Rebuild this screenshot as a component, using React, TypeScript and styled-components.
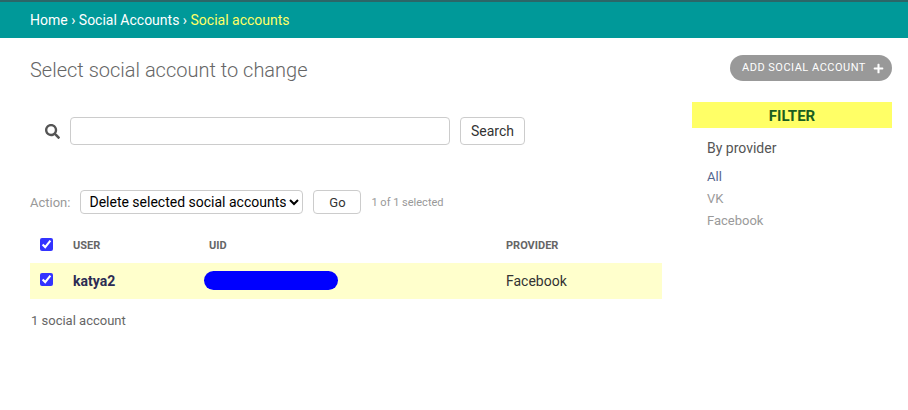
import { createGlobalStyle, styled } from 'styled-components'
import { FaSearch, FaPlus } from 'react-icons/fa'

const GlobalStyle = createGlobalStyle`
  html, body {
    margin: 0;
    padding: 0;
    background: #fff;
    font-family: Roboto, "Liberation Sans", sans-serif;
    color: #333;
  }
`

const Breadcrumbs = styled.div`
  height: 36px;
  border-top: 2px solid #2b6668;
  background: #009999;
  padding: 0 30px;
  display: flex;
  align-items: center;
  font-size: 14px;
  color: #fff;
  white-space: pre;
`

const Current = styled.span`
  color: #ffff66;
`

const Content = styled.div`
  display: flex;
  padding: 17px 16px 0 30px;
`

const Main = styled.div`
  width: 632px;
`

const Title = styled.h1`
  margin: 0;
  height: 30px;
  line-height: 30px;
  font-size: 20px;
  font-weight: 300;
  color: #666;
`

const SearchRow = styled.form`
  display: flex;
  align-items: center;
  margin: 32px 0 0 15px;
  height: 28px;
`

const SearchIcon = styled(FaSearch)`
  width: 15px;
  height: 15px;
  color: #555;
  margin-right: 10px;
`

const SearchInput = styled.input`
  box-sizing: border-box;
  width: 380px;
  height: 28px;
  border: 1px solid #ccc;
  border-radius: 4px;
  margin: 0 10px 0 0;
`

const SearchButton = styled.button`
  box-sizing: border-box;
  width: 65px;
  height: 28px;
  padding: 0;
  background: #fff;
  border: 1px solid #ccc;
  border-radius: 4px;
  font-family: inherit;
  font-size: 14px;
  color: #333;
`

const GoButton = styled(SearchButton)`
  width: 48px;
  height: 24px;
  font-size: 13px;
`

const ActionRow = styled.div`
  display: flex;
  align-items: center;
  height: 24px;
  margin-top: 45px;
`

const ActionLabel = styled.label`
  font-size: 13px;
  color: #999;
  margin-right: 10px;
`

const ActionSelect = styled.select`
  box-sizing: border-box;
  width: 223px;
  height: 24px;
  padding-left: 4px;
  background: #fff;
  border: 1px solid #ccc;
  border-radius: 4px;
  font-family: inherit;
  font-size: 14px;
  color: #000;
  margin-right: 10px;
`

const SelectedCount = styled.span`
  font-size: 11px;
  color: #999;
  margin-left: 10px;
`

const Table = styled.div`
  margin-top: 18px;
`

const Row = styled.div<{ $selected?: boolean }>`
  box-sizing: border-box;
  display: grid;
  grid-template-columns: 43px 136px 297px 1fr;
  align-items: center;
  height: ${(p) => (p.$selected ? 36 : 31)}px;
  padding-bottom: ${(p) => (p.$selected ? 0 : 4)}px;
  background: ${(p) => (p.$selected ? '#ffffcc' : '#fff')};
`

const Check = styled.input<{ $lift: number }>`
  width: 13px;
  height: 13px;
  margin: 0 0 ${(p) => p.$lift}px 10px;
  accent-color: #3333ff;
`

const Heading = styled.span`
  font-size: 11px;
  font-weight: 700;
  color: #666;
`

const UserName = styled.span`
  font-size: 14px;
  font-weight: 700;
  color: #2c2c54;
`

const Uid = styled.span`
  display: block;
  width: 134px;
  height: 19px;
  margin: 0 0 1px -5px;
  border-radius: 10px;
  background: #0000ff;
`

const Provider = styled.span`
  font-size: 14px;
  color: #333;
`

const Paginator = styled.p`
  margin: 14px 0 0 1px;
  font-size: 13px;
  line-height: 16px;
  color: #666;
`

const Side = styled.div`
  width: 200px;
  margin-left: 30px;
  display: flex;
  flex-direction: column;
`

const AddButton = styled.a`
  align-self: flex-end;
  box-sizing: border-box;
  width: 162px;
  height: 26px;
  border-radius: 13px;
  background: #999;
  color: #fff;
  font-size: 11px;
  letter-spacing: 0.5px;
  display: flex;
  align-items: center;
  justify-content: space-between;
  padding: 0 8px 2px 12px;

  svg {
    width: 11px;
    height: 11px;
    margin-top: 2px;
  }
`

const FilterPanel = styled.div`
  margin-top: 21px;
`

const FilterTitle = styled.h2`
  margin: 0;
  height: 26px;
  line-height: 28px;
  background: #ffff66;
  color: #1b5e20;
  font-size: 15px;
  font-weight: 700;
  text-align: center;
`

const FilterHeading = styled.h3`
  margin: 12px 0 0 15px;
  font-size: 14px;
  line-height: 16px;
  font-weight: 400;
  color: #555;
`

const FilterList = styled.ul`
  list-style: none;
  margin: 10px 0 0 15px;
  padding: 0;
`

const FilterItem = styled.li<{ $active?: boolean }>`
  height: 22px;
  line-height: 22px;
  font-size: 13px;
  color: ${(p) => (p.$active ? '#55668f' : '#9a9a9a')};
`

export default function App() {
  return (
    <>
      <GlobalStyle />
      <Breadcrumbs>
        Home › Social Accounts › <Current>Social accounts</Current>
      </Breadcrumbs>
      <Content>
        <Main>
          <Title>Select social account to change</Title>
          <SearchRow>
            <SearchIcon />
            <SearchInput type="text" />
            <SearchButton type="button">Search</SearchButton>
          </SearchRow>
          <ActionRow>
            <ActionLabel>Action:</ActionLabel>
            <ActionSelect defaultValue="delete">
              <option value="delete">Delete selected social accounts</option>
            </ActionSelect>
            <GoButton type="button">Go</GoButton>
            <SelectedCount>1 of 1 selected</SelectedCount>
          </ActionRow>
          <Table>
            <Row>
              <Check type="checkbox" defaultChecked $lift={2} />
              <Heading>USER</Heading>
              <Heading>UID</Heading>
              <Heading>PROVIDER</Heading>
            </Row>
            <Row $selected>
              <Check type="checkbox" defaultChecked $lift={4} />
              <UserName>katya2</UserName>
              <Uid />
              <Provider>Facebook</Provider>
            </Row>
          </Table>
          <Paginator>1 social account</Paginator>
        </Main>
        <Side>
          <AddButton>
            ADD SOCIAL ACCOUNT
            <FaPlus />
          </AddButton>
          <FilterPanel>
            <FilterTitle>FILTER</FilterTitle>
            <FilterHeading>By provider</FilterHeading>
            <FilterList>
              <FilterItem $active>All</FilterItem>
              <FilterItem>VK</FilterItem>
              <FilterItem>Facebook</FilterItem>
            </FilterList>
          </FilterPanel>
        </Side>
      </Content>
    </>
  )
}
